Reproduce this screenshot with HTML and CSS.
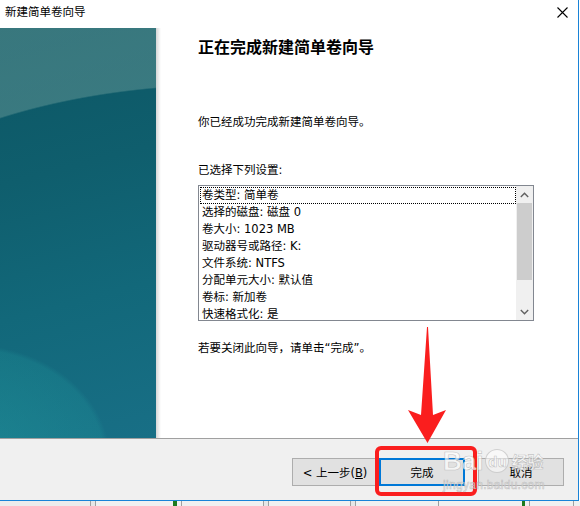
FILE: index.html
```html
<!DOCTYPE html>
<html lang="zh-CN">
<head>
    <meta charset="UTF-8">
    <title>新建简单卷向导</title>
    <link rel="stylesheet" href="styles.css">
</head>
<body>
    <div class="page">
        <div class="window">
            <div class="titlebar">
                <span class="title">新建简单卷向导</span>
                <svg class="close" width="11" height="11" viewBox="0 0 11 11">
                    <path d="M0.5 0.5 L10.5 10.5 M10.5 0.5 L0.5 10.5" stroke="#000" stroke-width="1.1" fill="none"/>
                </svg>
            </div>

            <div class="main">
                <div class="banner"></div>
                <div class="banner-edge"></div>
                <div class="content">
                    <h1>正在完成新建简单卷向导</h1>
                    <p class="intro">你已经成功完成新建简单卷向导。</p>
                    <p class="label">已选择下列设置:</p>

                    <div class="listbox">
                        <ul class="items">
                            <li class="focused">卷类型: 简单卷</li>
                            <li>选择的磁盘: 磁盘 0</li>
                            <li>卷大小: 1023 MB</li>
                            <li>驱动器号或路径: K:</li>
                            <li>文件系统: NTFS</li>
                            <li>分配单元大小: 默认值</li>
                            <li>卷标: 新加卷</li>
                            <li>快速格式化: 是</li>
                        </ul>
                        <div class="scrollbar">
                            <div class="sb-btn">
                                <svg width="9" height="6" viewBox="0 0 9 6"><path d="M0.8 5 L4.5 1.3 L8.2 5" stroke="#606060" stroke-width="1.4" fill="none"/></svg>
                            </div>
                            <div class="sb-track"><div class="sb-thumb"></div></div>
                            <div class="sb-btn">
                                <svg width="9" height="6" viewBox="0 0 9 6"><path d="M0.8 1 L4.5 4.7 L8.2 1" stroke="#606060" stroke-width="1.4" fill="none"/></svg>
                            </div>
                        </div>
                    </div>

                    <p class="hint">若要关闭此向导，请单击“完成”。</p>
                </div>
            </div>

            <div class="footer">
                <button class="btn">&lt; 上一步(<u>B</u>)</button>
                <button class="btn default">完成</button>
                <button class="btn cancel">取消</button>
            </div>
        </div>
        <div class="taskbar"></div>

        <!-- 标注 -->
        <svg class="arrow" width="60" height="130" viewBox="0 0 60 130">
            <polygon points="27,7 28,7 33,95 46,90 27.5,123 8,90 21,95" fill="#fa1e1e"/>
        </svg>
        <div class="highlight"></div>

        <div class="watermark">
            <div class="wm-row">
                <span class="wm-bai">Bai</span>
                <span class="wm-du">du</span>
                <span class="wm-jy">经验</span>
            </div>
            <div class="wm-url">jingyan.baidu.com</div>
        </div>
    </div>
</body>
</html>
```

FILE: styles.css
```css
* {
    box-sizing: border-box;
}

body {
    margin: 0;
    background-color: #fff;
    font-family: "DejaVu Sans", "Noto Sans CJK SC", sans-serif;
    font-size: 11.5px;
    color: #000;
}

.page {
    position: relative;
    width: 580px;
    height: 506px;
    overflow: hidden;
}

.window {
    width: 579px;
    height: 501px;
    border-right: 1px solid #1883d7;
    border-bottom: 1px solid #1883d7;
    background-color: #fff;
}

/* 标题栏 */
.titlebar {
    height: 28px;
    display: flex;
    align-items: center;
    justify-content: space-between;
    padding: 0 10px 0 5px;
}

.title {
    font-size: 11.5px;
    line-height: 14px;
    margin-top: -4px;
}

.close {
    display: block;
    margin-top: -4px;
}

/* 主体 */
.main {
    height: 410px;
    display: flex;
}

.banner {
    width: 156px;
    flex-shrink: 0;
    background:
        radial-gradient(ellipse 140px 115px at -30px 432px, rgba(35, 160, 162, 0.45) 0, rgba(35, 160, 162, 0.22) 96%, transparent 100%),
        radial-gradient(ellipse 420px 204px at 230px 260px, transparent 99.3%, rgba(105, 155, 153, 0.48) 100%),
        linear-gradient(165deg, #0c5664 0%, #0f5e6d 35%, #12687a 65%, #186f86 100%);
}

.banner-edge {
    width: 5px;
    flex-shrink: 0;
    background: linear-gradient(to right, #d6d6d6, #f4f4f4 70%, #fff);
}

.content {
    flex: 1;
    padding: 10px 0 0 37px;
}

h1 {
    margin: 0;
    font-size: 16px;
    line-height: 20px;
    font-weight: bold;
}

.intro {
    margin: 56px 0 0;
    line-height: 16px;
}

.label {
    margin: 32px 0 0;
    line-height: 16px;
}

/* 列表框 */
.listbox {
    margin-top: 7px;
    width: 336px;
    height: 136px;
    border: 1px solid #828790;
    display: flex;
    overflow: hidden;
}

.items {
    flex: 1;
    list-style: none;
    margin: 0;
    padding: 1px 0 0 1px;
}

.items li {
    height: 17px;
    line-height: 17px;
    padding-left: 2px;
    white-space: nowrap;
}

.items li.focused {
    outline: 1px dotted #000;
    outline-offset: -1px;
}

.scrollbar {
    width: 17px;
    display: flex;
    flex-direction: column;
    background-color: #f0f0f0;
}

.sb-btn {
    height: 17px;
    display: flex;
    align-items: center;
    justify-content: center;
}

.sb-track {
    flex: 1;
}

.sb-thumb {
    height: 77px;
    margin: 0 1px;
    background-color: #cdcdcd;
}

.hint {
    margin: 19px 0 0;
    line-height: 16px;
}

/* 底部按钮 */
.footer {
    height: 62px;
    border-top: 1px solid #a0a0a0;
    background-color: #f0f0f0;
    display: flex;
    justify-content: flex-end;
    align-items: flex-start;
    padding: 19px 14px 0 0;
}

.btn {
    width: 86px;
    height: 28px;
    padding: 0;
    border: 1px solid #adadad;
    background-color: #e1e1e1;
    font-family: inherit;
    font-size: 11.5px;
    color: #000;
}

.btn.default {
    margin-left: 1px;
    border: 2px solid #0078d7;
}

.btn.cancel {
    margin-left: 13px;
}

.taskbar {
    height: 5px;
    background: linear-gradient(to right,
        #ececec 90px, #a0a0a0 90px 91px, #e6e6e6 91px 95px, #a0a0a0 95px 96px,
        #f0f0f0 96px 173px, #1e7a1e 173px 177px, #f0f0f0 177px 181px, #a0a0a0 181px 182px,
        #f0f0f0 182px 263px, #a0a0a0 263px 264px, #e6e6e6 264px 268px, #a0a0a0 268px 269px,
        #f0f0f0 269px 350px, #a0a0a0 350px 351px, #e6e6e6 351px 355px, #a0a0a0 355px 356px,
        #f0f0f0 356px 438px, #a0a0a0 438px 439px, #f0f0f0 439px 522px, #1e7a1e 522px 525px,
        #f0f0f0 525px 529px, #a0a0a0 529px 530px, #f0f0f0 530px 573px, #a0a0a0 573px 574px, #f0f0f0 574px);
}

/* 红色标注 */
.arrow {
    position: absolute;
    left: 400px;
    top: 320px;
}

.highlight {
    position: absolute;
    left: 375px;
    top: 446px;
    width: 102px;
    height: 50px;
    border: 4px solid #fa1e1e;
    border-radius: 6px;
}

/* 水印 */
.watermark {
    position: absolute;
    left: 443px;
    top: 446px;
    color: rgba(255, 255, 255, 0.7);
    -webkit-text-stroke: 0.6px rgba(150, 150, 150, 0.55);
    font-family: "Liberation Sans", Arial, sans-serif;
}

.wm-row {
    display: flex;
    align-items: center;
    gap: 2px;
}

.wm-bai {
    font-size: 26px;
    font-weight: bold;
    line-height: 30px;
}

.wm-du {
    width: 24px;
    height: 24px;
    border-radius: 50%;
    background-color: rgba(255, 255, 255, 0.55);
    border: 1px solid rgba(170, 170, 170, 0.5);
    display: flex;
    align-items: center;
    justify-content: center;
    font-size: 15px;
    font-weight: bold;
}

.wm-jy {
    font-family: "Noto Sans CJK SC", sans-serif;
    font-size: 16px;
    font-weight: bold;
}

.wm-url {
    font-size: 12px;
    line-height: 14px;
    margin-top: 2px;
    letter-spacing: 0.3px;
}
```
